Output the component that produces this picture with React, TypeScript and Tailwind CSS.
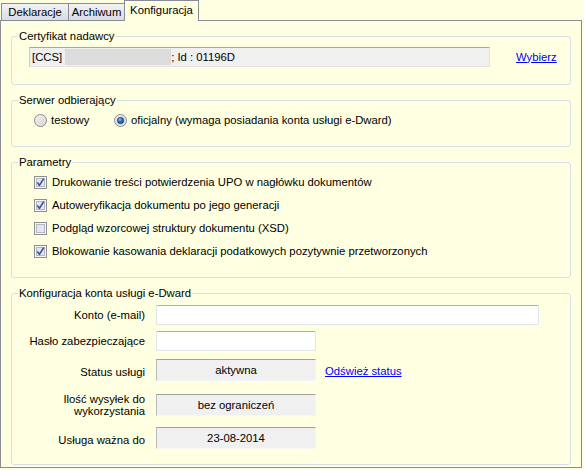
import React from "react";

const font = "font-['Liberation_Sans',Arial,sans-serif]";

function Tab({ label, active, className }: { label: string; active?: boolean; className?: string }) {
  if (active) {
    return (
      <div className={`relative z-10 -mb-px flex h-[21px] items-start justify-center border border-b-0 border-[#898c95] bg-[#ffffe1] pt-[3px] text-black ${className ?? ""}`}>
        {label}
      </div>
    );
  }
  return (
    <div className={`flex h-[17px] items-center justify-center border border-b-0 border-[#898c95] bg-linear-to-b from-[#f3f3f3] to-[#d7dce6] pt-[1px] text-black ${className ?? ""}`}>
      {label}
    </div>
  );
}

function Group({ title, className, children }: { title: string; className?: string; children: React.ReactNode }) {
  return (
    <fieldset className={`rounded-[3px] border border-[#d5dfe5] ${className ?? ""}`}>
      <legend className="ml-[6px] px-[1px] leading-[13px]">{title}</legend>
      {children}
    </fieldset>
  );
}

function Radio({ checked }: { checked?: boolean }) {
  return (
    <svg width="13" height="13" viewBox="0 0 13 13" className="shrink-0">
      <defs>
        <linearGradient id={checked ? "rgOn" : "rgOff"} x1="0" y1="0" x2="1" y2="1">
          <stop offset="0" stopColor="#f4f4f4" />
          <stop offset="1" stopColor="#d0d0d0" />
        </linearGradient>
        <radialGradient id="rdot" cx="0.4" cy="0.35" r="0.7">
          <stop offset="0" stopColor="#8fc3f0" />
          <stop offset="0.5" stopColor="#2a6fb3" />
          <stop offset="1" stopColor="#0f3f78" />
        </radialGradient>
      </defs>
      <circle cx="6.5" cy="6.5" r="6" fill={`url(#${checked ? "rgOn" : "rgOff"})`} stroke="#8a8a8a" strokeWidth="1" />
      <circle cx="6.5" cy="6.5" r="4.6" fill="none" stroke="#e8e8e8" strokeWidth="0.8" />
      {checked && <circle cx="6.5" cy="6.5" r="3.2" fill="url(#rdot)" stroke="#1d3a63" strokeWidth="0.6" />}
    </svg>
  );
}

function Check({ checked }: { checked?: boolean }) {
  return (
    <svg width="13" height="13" viewBox="0 0 13 13" className="shrink-0">
      <rect x="0.5" y="0.5" width="12" height="12" fill="#f6f6f6" stroke="#8e8f8f" />
      <rect x="2.5" y="2.5" width="8" height="8" fill="#e3e6ef" stroke="#b4b8c4" />
      {checked && (
        <path d="M3.3 6.4 L5.4 9.4 L9.7 2.6" fill="none" stroke="#3b4f8c" strokeWidth="1.6" strokeLinejoin="round" />
      )}
    </svg>
  );
}

const options = [
  { label: "Drukowanie treści potwierdzenia UPO w nagłówku dokumentów", checked: true },
  { label: "Autoweryfikacja dokumentu po jego generacji", checked: true },
  { label: "Podgląd wzorcowej struktury dokumentu (XSD)", checked: false },
  { label: "Blokowanie kasowania deklaracji podatkowych pozytywnie przetworzonych", checked: true },
];

function ReadBox({ value }: { value: string }) {
  return (
    <div className="flex h-[22px] w-[160px] items-center justify-center border border-[#f6f6f6] border-t-[#a0a0a0] border-l-[#b9b9b9] bg-[#f0f0f0]">
      {value}
    </div>
  );
}

export default function App() {
  return (
    <div className={`h-[470px] w-[584px] bg-[#ffffe1] text-[11.3px] leading-[13px] text-black ${font}`}>
      {/* zakładki */}
      <div className="relative z-10 flex h-[20px] items-end pl-px">
        <Tab label="Deklaracje" className="w-[68px]" />
        <Tab label="Archiwum" className="-ml-px w-[57px]" />
        <Tab label="Konfiguracja" active className="-ml-px w-[75px]" />
      </div>

      <div className="flex h-[448px] w-[582px] flex-col border border-[#898c95] px-[10px] pt-[9px]">
        {/* certyfikat */}
        <Group title="Certyfikat nadawcy">
          <div className="mt-[4px] flex items-center pb-[17px]">
            <div className="ml-[17px] flex h-[20px] w-[461px] items-center border border-[#e3e3e3] border-t-[#a8a8a8] border-l-[#c8c8c8] bg-[#f0f0f0] pl-[2px]">
              <span>[CCS]</span>
              <span className="ml-[3px] h-[16px] w-[106px] bg-[#dcdcdc]" />
              <span>; Id : 01196D</span>
            </div>
            <a className="ml-[26px] cursor-pointer text-[#0000ff] underline">Wybierz</a>
          </div>
        </Group>

        {/* serwer */}
        <Group title="Serwer odbierający" className="mt-[9px]">
          <div className="mt-[7px] flex h-[13px] items-center">
            <label className="ml-[22px] flex w-[80px] items-center gap-[4px]">
              <Radio />
              <span>testowy</span>
            </label>
            <label className="flex items-center gap-[4px]">
              <Radio checked />
              <span>oficjalny (wymaga posiadania konta usługi e-Dward)</span>
            </label>
          </div>
          <div className="h-[19px]" />
        </Group>

        {/* parametry */}
        <Group title="Parametry" className="mt-[9px]">
          <div className="mt-[7px] flex flex-col gap-[10px] pb-[19px]">
            {options.map((o) => (
              <label key={o.label} className="ml-[22px] flex h-[13px] items-center gap-[5px]">
                <Check checked={o.checked} />
                <span>{o.label}</span>
              </label>
            ))}
          </div>
        </Group>

        {/* konto e-Dward */}
        <Group title="Konfiguracja konta usługi e-Dward" className="mt-[9px]">
          <div className="mt-[5px] flex flex-col pb-[15px]">
            <div className="flex items-center">
              <span className="w-[133px] text-right">Konto (e-mail)</span>
              <div className="ml-[11px] h-[20px] w-[383px] rounded-[2px] border border-[#dfe3ea] border-t-[#abadb3] bg-white" />
            </div>
            <div className="mt-[6px] flex items-center">
              <span className="w-[133px] text-right">Hasło zabezpieczające</span>
              <div className="ml-[11px] h-[20px] w-[160px] rounded-[2px] border border-[#dfe3ea] border-t-[#abadb3] bg-white" />
            </div>
            <div className="mt-[8px] flex items-center">
              <span className="mt-[4px] w-[133px] text-right">Status usługi</span>
              <div className="ml-[11px]">
                <ReadBox value="aktywna" />
              </div>
              <a className="ml-[9px] mt-[2px] cursor-pointer text-[#0000ff] underline">Odśwież status</a>
            </div>
            <div className="mt-[12px] flex items-center">
              <span className="w-[133px] text-right leading-[12px]">
                Ilość wysyłek do
                <br />
                wykorzystania
              </span>
              <div className="ml-[11px]">
                <ReadBox value="bez ograniczeń" />
              </div>
            </div>
            <div className="mt-[10px] flex items-center">
              <span className="mt-[4px] w-[133px] text-right">Usługa ważna do</span>
              <div className="ml-[11px]">
                <ReadBox value="23-08-2014" />
              </div>
            </div>
          </div>
        </Group>
      </div>
    </div>
  );
}
